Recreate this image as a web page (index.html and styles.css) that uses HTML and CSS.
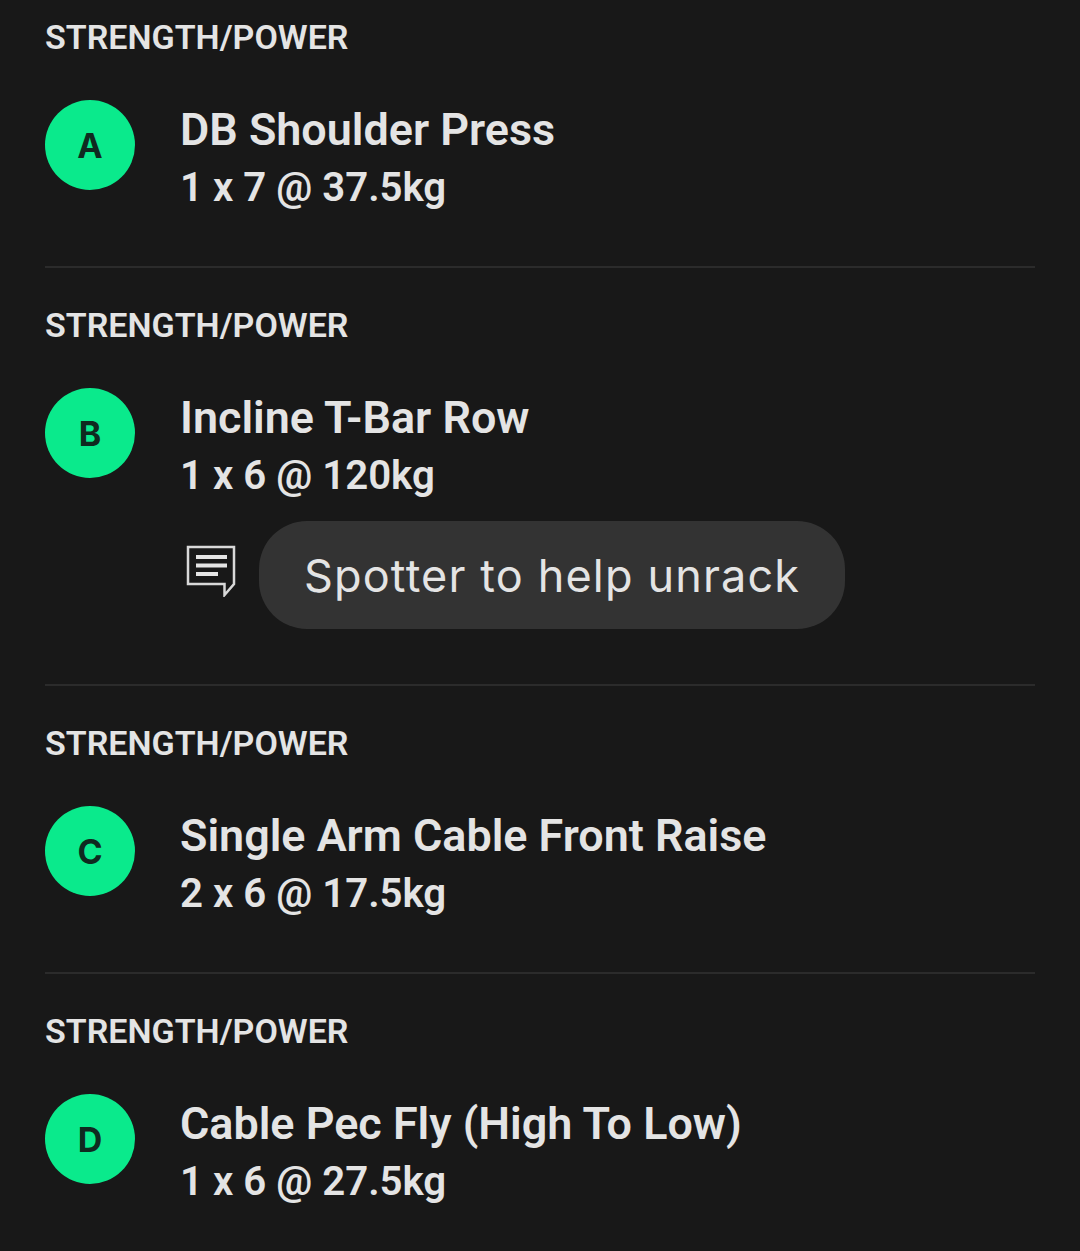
FILE: index.html
```html
<!DOCTYPE html>
<html lang="en">
<head>
    <meta charset="UTF-8">
    <meta name="viewport" content="width=device-width, initial-scale=1.0">
    <title>Workout</title>
    <link rel="stylesheet" href="styles.css">
</head>
<body>
    <div class="container">
        <section class="block">
            <h2 class="block-label">STRENGTH/POWER</h2>
            <div class="exercise">
                <div class="badge">A</div>
                <div class="details">
                    <h3 class="name">DB Shoulder Press</h3>
                    <p class="sets">1 x 7 @ 37.5kg</p>
                </div>
            </div>
        </section>
        <section class="block">
            <h2 class="block-label">STRENGTH/POWER</h2>
            <div class="exercise">
                <div class="badge">B</div>
                <div class="details">
                    <h3 class="name">Incline T-Bar Row</h3>
                    <p class="sets">1 x 6 @ 120kg</p>
                    <div class="note">
                        <svg class="note-icon" width="50" height="52" viewBox="0 0 50 52" fill="none">
                            <path d="M2 2H48V39L38.5 50V39H2Z" stroke="#d8d8d8" stroke-width="2.5"/>
                            <path d="M10 12H41M10 20.5H41M10 29H32" stroke="#e4e4e4" stroke-width="4"/>
                        </svg>
                        <div class="bubble">Spotter to help unrack</div>
                    </div>
                </div>
            </div>
        </section>
        <section class="block">
            <h2 class="block-label">STRENGTH/POWER</h2>
            <div class="exercise">
                <div class="badge">C</div>
                <div class="details">
                    <h3 class="name">Single Arm Cable Front Raise</h3>
                    <p class="sets">2 x 6 @ 17.5kg</p>
                </div>
            </div>
        </section>
        <section class="block">
            <h2 class="block-label">STRENGTH/POWER</h2>
            <div class="exercise">
                <div class="badge">D</div>
                <div class="details">
                    <h3 class="name">Cable Pec Fly (High To Low)</h3>
                    <p class="sets">1 x 6 @ 27.5kg</p>
                </div>
            </div>
        </section>
    </div>
</body>
</html>
```
FILE: styles.css
```css
html, body {
    height: 100%;
}
body {
    font-family: 'Roboto', 'Liberation Sans', sans-serif;
    background-color: #181818;
    color: #e4e4e4;
    margin: 0;
    overflow: hidden;
}
.container {
    padding: 0 45px;
}
.block {
    padding: 37px 0 49px;
    border-bottom: 2px solid #2b2b2b;
}
.block:first-child {
    padding-top: 17px;
}
.block:last-child {
    border-bottom: none;
}
.block-label {
    margin: 0;
    font-size: 34px;
    line-height: 40px;
    font-weight: 600;
}
.exercise {
    display: flex;
    margin-top: 43px;
}
.badge {
    flex: none;
    width: 90px;
    height: 90px;
    margin-right: 45px;
    border-radius: 50%;
    background-color: #0aea8c;
    color: #0f2a20;
    display: flex;
    align-items: center;
    justify-content: center;
    font-family: 'Inter', 'Roboto', sans-serif;
    font-size: 34px;
    font-weight: 700;
}
.details {
    margin-top: 1px;
}
.name {
    margin: 0;
    font-size: 44.9px;
    line-height: 58px;
    font-weight: 600;
}
.sets {
    margin: 0;
    font-size: 40.2px;
    line-height: 58px;
    font-weight: 600;
}
.note {
    display: flex;
    align-items: center;
    margin-top: 16px;
    margin-bottom: 6px;
    gap: 23px;
}
.note-icon {
    flex: none;
    margin-left: 6px;
    margin-bottom: 8px;
}
.bubble {
    background-color: #333333;
    border-radius: 48px;
    height: 108px;
    padding: 0 45px;
    display: flex;
    align-items: center;
    font-family: 'Inter', 'Noto Sans', sans-serif;
    font-weight: 400;
    font-size: 45px;
    letter-spacing: 1.15px;
    color: #e4e4e4;
}
```
